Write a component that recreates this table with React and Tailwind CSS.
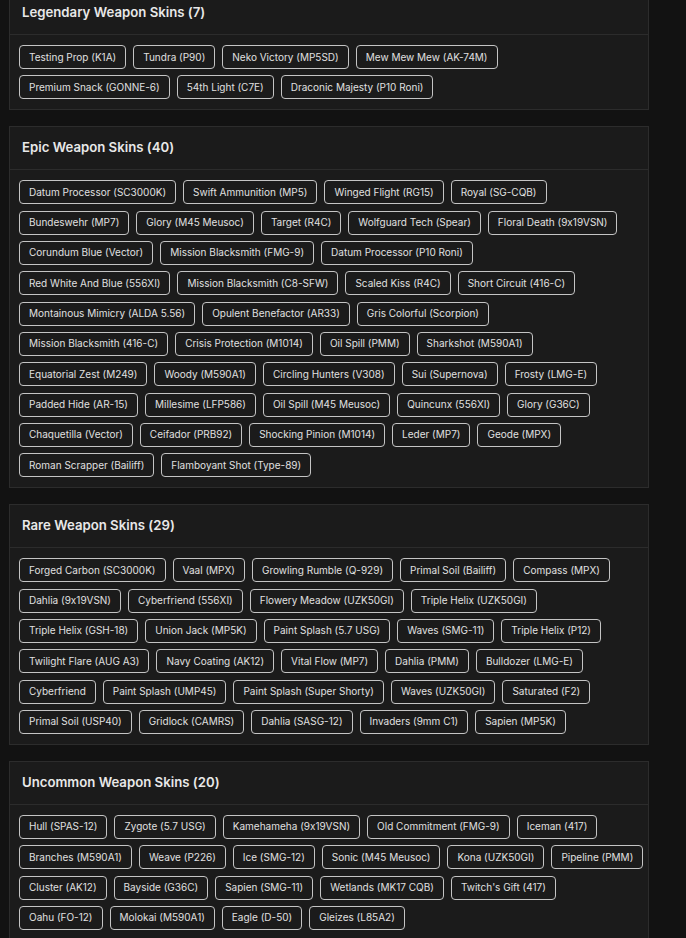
const SECTIONS = [
  {
    title: 'Legendary Weapon Skins',
    rows: [
      ['Testing Prop (K1A)', 'Tundra (P90)', 'Neko Victory (MP5SD)', 'Mew Mew Mew (AK-74M)'],
      ['Premium Snack (GONNE-6)', '54th Light (C7E)', 'Draconic Majesty (P10 Roni)'],
    ],
  },
  {
    title: 'Epic Weapon Skins',
    rows: [
      ['Datum Processor (SC3000K)', 'Swift Ammunition (MP5)', 'Winged Flight (RG15)', 'Royal (SG-CQB)'],
      ['Bundeswehr (MP7)', 'Glory (M45 Meusoc)', 'Target (R4C)', 'Wolfguard Tech (Spear)', 'Floral Death (9x19VSN)'],
      ['Corundum Blue (Vector)', 'Mission Blacksmith (FMG-9)', 'Datum Processor (P10 Roni)'],
      ['Red White And Blue (556XI)', 'Mission Blacksmith (C8-SFW)', 'Scaled Kiss (R4C)', 'Short Circuit (416-C)'],
      ['Montainous Mimicry (ALDA 5.56)', 'Opulent Benefactor (AR33)', 'Gris Colorful (Scorpion)'],
      ['Mission Blacksmith (416-C)', 'Crisis Protection (M1014)', 'Oil Spill (PMM)', 'Sharkshot (M590A1)'],
      ['Equatorial Zest (M249)', 'Woody (M590A1)', 'Circling Hunters (V308)', 'Sui (Supernova)', 'Frosty (LMG-E)'],
      ['Padded Hide (AR-15)', 'Millesime (LFP586)', 'Oil Spill (M45 Meusoc)', 'Quincunx (556XI)', 'Glory (G36C)'],
      ['Chaquetilla (Vector)', 'Ceifador (PRB92)', 'Shocking Pinion (M1014)', 'Leder (MP7)', 'Geode (MPX)'],
      ['Roman Scrapper (Bailiff)', 'Flamboyant Shot (Type-89)'],
    ],
  },
  {
    title: 'Rare Weapon Skins',
    rows: [
      ['Forged Carbon (SC3000K)', 'Vaal (MPX)', 'Growling Rumble (Q-929)', 'Primal Soil (Bailiff)', 'Compass (MPX)'],
      ['Dahlia (9x19VSN)', 'Cyberfriend (556XI)', 'Flowery Meadow (UZK50GI)', 'Triple Helix (UZK50GI)'],
      ['Triple Helix (GSH-18)', 'Union Jack (MP5K)', 'Paint Splash (5.7 USG)', 'Waves (SMG-11)', 'Triple Helix (P12)'],
      ['Twilight Flare (AUG A3)', 'Navy Coating (AK12)', 'Vital Flow (MP7)', 'Dahlia (PMM)', 'Bulldozer (LMG-E)'],
      ['Cyberfriend', 'Paint Splash (UMP45)', 'Paint Splash (Super Shorty)', 'Waves (UZK50GI)', 'Saturated (F2)'],
      ['Primal Soil (USP40)', 'Gridlock (CAMRS)', 'Dahlia (SASG-12)', 'Invaders (9mm C1)', 'Sapien (MP5K)'],
    ],
  },
  {
    title: 'Uncommon Weapon Skins',
    rows: [
      ['Hull (SPAS-12)', 'Zygote (5.7 USG)', 'Kamehameha (9x19VSN)', 'Old Commitment (FMG-9)', 'Iceman (417)'],
      ['Branches (M590A1)', 'Weave (P226)', 'Ice (SMG-12)', 'Sonic (M45 Meusoc)', 'Kona (UZK50GI)', 'Pipeline (PMM)'],
      ['Cluster (AK12)', 'Bayside (G36C)', 'Sapien (SMG-11)', 'Wetlands (MK17 CQB)', "Twitch's Gift (417)"],
      ['Oahu (FO-12)', 'Molokai (M590A1)', 'Eagle (D-50)', 'Gleizes (L85A2)'],
    ],
  },
];

function SkinPanel({ title, rows }) {
  const count = rows.reduce((n, r) => n + r.length, 0);

  return (
    <div className="w-[640px] mb-4 bg-[#1b1b1b] border border-[#2c2c2c]">
      <div className="h-[43px] flex items-center px-3 border-b border-[#2c2c2c]">
        <h2 className="text-[13.2px] font-semibold text-[#e8e8e8]">
          {title} ({count})
        </h2>
      </div>
      <div className="flex flex-col gap-y-[6.33px] px-[9px] py-[10px]">
        {rows.map((row, i) => (
          <div key={i} className="flex gap-x-[7px]">
            {row.map((skin) => (
              <span
                key={skin}
                className="h-6 flex items-center px-[9px] border border-[#c4c4c4] rounded text-[10px] text-[#e0e0e0] whitespace-nowrap"
              >
                {skin}
              </span>
            ))}
          </div>
        ))}
      </div>
    </div>
  );
}

export default function App() {
  return (
    <div
      className="min-h-screen bg-[#121212] pl-[9px] [font-feature-settings:'calt'_0]"
      style={{ fontFamily: 'Inter, "DejaVu Sans", sans-serif' }}
    >
      <div className="-mt-[9px]">
        {SECTIONS.map((s) => (
          <SkinPanel key={s.title} title={s.title} rows={s.rows} />
        ))}
      </div>
    </div>
  );
}
